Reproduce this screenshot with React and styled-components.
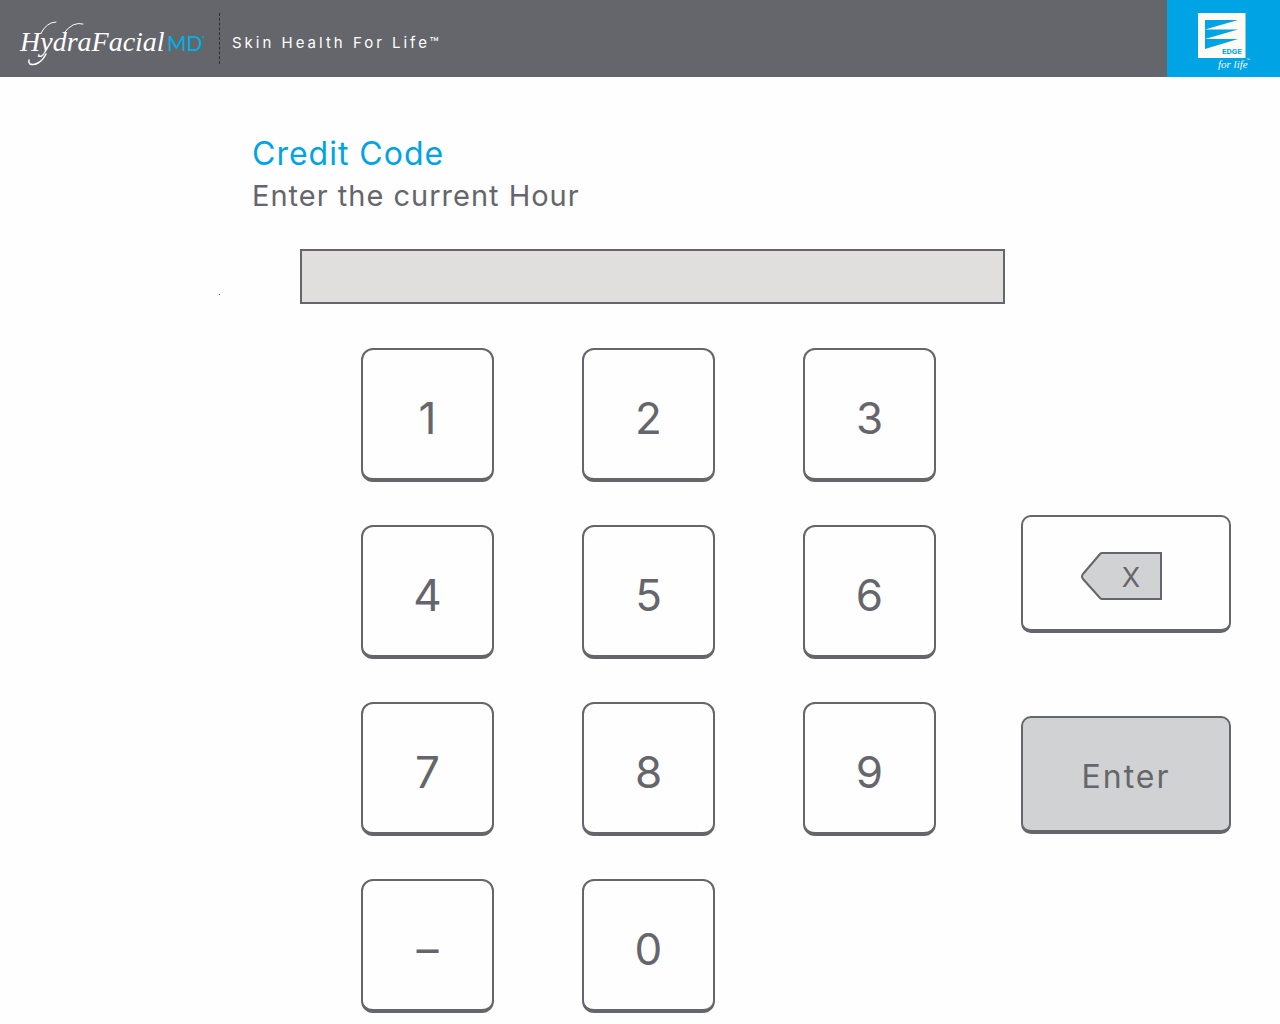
import React, { useState } from 'react';
import styled, { createGlobalStyle } from 'styled-components';

const ink = '#65666b';
const blue = '#00a4e4';

const GlobalStyle = createGlobalStyle`
  *, *::before, *::after { box-sizing: border-box; }
  body {
    margin: 0;
    background: #fefefe;
    color: ${ink};
    font-family: Inter, 'Liberation Sans', sans-serif;
  }
`;

const Header = styled.header`
  display: flex;
  align-items: stretch;
  height: 77px;
  background: ${ink};
  color: #fff;
`;

const Brand = styled.div`
  display: flex;
  align-items: center;
  flex: 1;
  padding-left: 18px;
`;

const Wordmark = styled.svg`
  width: 201px;
  height: 60px;
`;

const Tagline = styled.p`
  margin: 0;
  padding: 8px 0 0 12px;
  height: 51px;
  display: flex;
  align-items: center;
  border-left: 1px dashed #2f2f33;
  font-size: 15px;
  letter-spacing: 3px;
`;

const EdgeTile = styled.div`
  width: 113px;
  background: ${blue};
`;

const Headings = styled.div`
  padding: 56px 48px 0 252px;
`;

const Title = styled.h1`
  margin: 0;
  font-size: 32px;
  line-height: 42px;
  font-weight: 400;
  letter-spacing: 1px;
  color: ${blue};
`;

const Prompt = styled.label`
  display: block;
  font-size: 29px;
  line-height: 42px;
  letter-spacing: 1px;
`;

const FieldRow = styled.div`
  display: flex;
  gap: 80px;
  padding: 32px 275px 0 219px;
`;

const Dot = styled.span`
  width: 1px;
  height: 1px;
  margin-top: 45px;
  background: ${ink};
`;

const CodeField = styled.input`
  flex: 1;
  min-width: 0;
  height: 55px;
  padding: 0 12px;
  border: 2px solid ${ink};
  border-radius: 0;
  background: #e0dfde;
  color: ${ink};
  font: inherit;
  font-size: 32px;
`;

const Controls = styled.div`
  display: flex;
  justify-content: space-between;
  padding: 44px 49px 8px 361px;
`;

const Keypad = styled.div`
  display: grid;
  grid-template-columns: repeat(3, 133px);
  grid-auto-rows: 134px;
  gap: 43px 88px;
`;

const Actions = styled.div`
  display: flex;
  flex-direction: column;
  gap: 83px;
  padding-top: 167px;
`;

const Button = styled.button`
  display: flex;
  align-items: center;
  justify-content: center;
  margin: 0;
  padding: 8px 0 0;
  border: 2px solid ${ink};
  border-bottom-width: 4px;
  border-radius: 12px;
  background: #fefefe;
  color: ${ink};
  font: inherit;
  font-size: 44px;
  cursor: pointer;
`;

const ActionButton = styled(Button)`
  width: 210px;
  height: 118px;
  padding: ${(p) => (p.$filled ? '4px 0 0' : '6px 8px 0 0')};
  border-radius: 10px;
  background: ${(p) => (p.$filled ? '#d1d2d4' : '#fefefe')};
  font-size: 32px;
  letter-spacing: ${(p) => (p.$filled ? '2px' : 'normal')};
`;

function HydraLogo() {
  return (
    <Wordmark viewBox="0 0 201 60" role="img" aria-label="HydraFacial MD">
      <text x="2" y="42" fill="#fff" fontFamily="'Liberation Serif', serif" fontStyle="italic" fontSize="28">HydraFacial</text>
      <g fill="none" stroke="#fff" strokeLinecap="round">
        <path d="M28 45C24 53 17 57 12 55Q10 53 11 51" strokeWidth="1.500" />
        <path d="M23 24Q29 13 38 13" />
        <path d="M46 24Q55 12 65 15" />
      </g>
      <text x="149" y="42" fill="#00b1e7" fontFamily="Lato, sans-serif" fontSize="21">MD</text>
      <circle cx="185" cy="28" r="1" fill="#00b1e7" />
    </Wordmark>
  );
}

function EdgeLogo() {
  return (
    <svg width="113" height="77" viewBox="0 0 113 77" role="img" aria-label="Edge for life">
      <path d="M31 13H78.500V58H31Z" fill="#fffaf3" />
      <path d="M38 20H71L38 29.500ZM38 29.500H71L38 39ZM38 39H71L38 49Z" fill={blue} />
      <text x="55" y="54" fill={blue} fontFamily="'Liberation Sans Narrow', Roboto, sans-serif" fontWeight="700" fontSize="8">EDGE</text>
      <text x="51" y="68" fill="#fffaf3" fontFamily="'Liberation Serif', serif" fontStyle="italic" fontSize="11">for life</text>
      <text x="79" y="61" fill="#fffaf3" fontFamily="'Liberation Sans', sans-serif" fontSize="4">™</text>
    </svg>
  );
}

const KEYS = ['1', '2', '3', '4', '5', '6', '7', '8', '9', '–', '0'];

export default function App() {
  const [code, setCode] = useState('');
  return (
    <>
      <GlobalStyle />
      <Header>
        <Brand>
          <HydraLogo />
          <Tagline>Skin Health For Life™</Tagline>
        </Brand>
        <EdgeTile><EdgeLogo /></EdgeTile>
      </Header>
      <main>
        <Headings>
          <Title>Credit Code</Title>
          <Prompt htmlFor="code">Enter the current Hour</Prompt>
        </Headings>
        <FieldRow>
          <Dot />
          <CodeField id="code" value={code} onChange={(e) => setCode(e.target.value)} />
        </FieldRow>
        <Controls>
          <Keypad>
            {KEYS.map((k) => (
              <Button key={k} type="button" onClick={() => setCode(code + k)}>{k}</Button>
            ))}
          </Keypad>
          <Actions>
            <ActionButton type="button" aria-label="Backspace X" onClick={() => setCode(code.slice(0, -1))}>
              <svg width="82" height="50" viewBox="0 0 82 50">
                <path d="M21 2H80V48H21Q20 48 19 47L2 28Q0 25.500 2 23L19 3Q20 2 21 2Z" fill="#d1d2d4" stroke={ink} strokeWidth="2" />
                <text x="50" y="36" textAnchor="middle" fill={ink} fontSize="27">X</text>
              </svg>
            </ActionButton>
            <ActionButton type="button" $filled>Enter</ActionButton>
          </Actions>
        </Controls>
      </main>
    </>
  );
}
